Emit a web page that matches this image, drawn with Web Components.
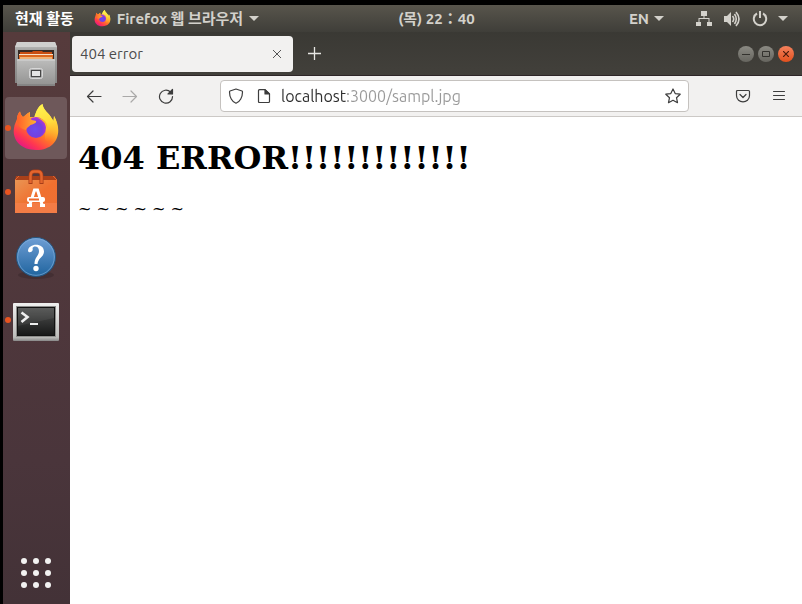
<!DOCTYPE html>
<html lang="ko">
<head>
<meta charset="utf-8">
<title>404 error</title>
<style>
html, body { height: 100%; }
body { margin: 0; background: #000; font-family: Ubuntu, "Noto Sans", "Noto Sans CJK KR", sans-serif; }
</style>
</head>
<body>
<desktop-shell>
  <top-bar slot="bar"></top-bar>
  <app-dock slot="dock">
    <dock-item label="파일"><svg viewBox="0 0 48 48">
      <defs><linearGradient id="fb" x1="0" y1="0" x2="0" y2="1"><stop offset="0" stop-color="#c9c9c8"/><stop offset=".2" stop-color="#a3a3a2"/><stop offset="1" stop-color="#858584"/></linearGradient>
      <linearGradient id="ff" x1="0" y1="0" x2="0" y2="1"><stop offset="0" stop-color="#bdbdbc"/><stop offset="1" stop-color="#929291"/></linearGradient></defs>
      <path d="M5 2H43L45 7V43H3V7Z" fill="url(#fb)"/><path d="M5 2H43L45 7H3Z" fill="#cfcfce"/>
      <path d="M6 10H42V20H6Z" fill="#382b25"/><path d="M8 12H20L21 11H30L31 12H40V20H8Z" fill="#c94e12"/><path d="M7 14H41V20H7Z" fill="#f6e0c8"/><path d="M7 15H41V20H7Z" fill="#dd681f"/><path d="M8 17H40V20H8Z" fill="#f1b275"/>
      <path d="M5 20Q5 19 6 19H42Q43 19 43 20V46H5Z" fill="url(#ff)"/><path d="M5 20H43" stroke="#d8d8d7"/><path d="M5 45H43" stroke="#777"/>
      <rect x="17.500" y="28.500" width="13" height="10" rx="2" fill="#aaa" stroke="#d8d8d8"/><rect x="19.500" y="30.500" width="9" height="6" fill="#e5e5e5" stroke="#464646"/></svg></dock-item>
    <dock-item label="Firefox 웹 브라우저" running active><fox-logo></fox-logo></dock-item>
    <dock-item label="Ubuntu 소프트웨어" running><svg viewBox="0 0 48 48">
      <defs><linearGradient id="sw" x1="0" y1="0" x2="1" y2="1"><stop offset="0" stop-color="#e99554"/><stop offset=".5" stop-color="#f0702f"/><stop offset="1" stop-color="#ee6f35"/></linearGradient></defs>
      <path d="M4 8H43L45 12V15H3V12Z" fill="#a8401a"/><path d="M7 8L3 12M41 8L45 12" stroke="#df6530"/>
      <path d="M3 12H45V45H3Z" fill="url(#sw)"/><path d="M3 35H45V45H3Z" fill="#f5824e" opacity=".7"/>
      <path d="M18.500 16V8Q18.500 3.500 22 3.500H26Q29.500 3.500 29.500 8V16" fill="none" stroke="#a63d19" stroke-width="4"/><path d="M18.500 15V8Q18.500 3.500 22 3.500H26Q29.500 3.500 29.500 8V15" fill="none" stroke="#e4652d" stroke-width="2.500"/>
      <path d="M17.500 38L22.500 22H25.500L30.500 38M15 37.500H20M28 37.500H33" fill="none" stroke="#fff" stroke-width="3"/><path d="M15 37.500H20M28 37.500H33" stroke="#fff" stroke-width="2"/><rect x="15" y="29" width="18" height="5" rx="2" fill="#fff"/><path d="M17 31.500H27" stroke="#ee6a2d" stroke-width="2"/></svg></dock-item>
    <dock-item label="도움말"><svg viewBox="0 0 48 48">
      <defs><linearGradient id="hp" x1="0" y1="0" x2="0" y2="1"><stop offset="0" stop-color="#6e9ed5"/><stop offset="1" stop-color="#1f649e"/></linearGradient></defs>
      <ellipse cx="24" cy="43" rx="18" ry="4" fill="#000" opacity=".15"/><circle cx="24" cy="25" r="19.500" fill="url(#hp)" stroke="#24557f"/><circle cx="24" cy="25" r="18.300" fill="none" stroke="#83afdc" opacity=".65"/>
      <path d="M16 19C16 11 32 10 32 19.500C32 25 26.300 25.500 25.500 32H22.500C22.500 25 27 24 27 19C27 13.500 21.500 13.500 20.500 16C22 19.500 17 22 16 19Z" fill="#fff"/><circle cx="24" cy="36.500" r="2.700" fill="#fff"/></svg></dock-item>
    <dock-item label="터미널" running><svg viewBox="0 0 48 48">
      <defs><linearGradient id="tf" x1="0" y1="0" x2="0" y2="1"><stop offset="0" stop-color="#f0f0ef"/><stop offset=".9" stop-color="#bcbcba"/><stop offset="1" stop-color="#888"/></linearGradient><linearGradient id="ts" x1="0" y1="0" x2="0" y2="1"><stop offset="0" stop-color="#515251"/><stop offset="1" stop-color="#171818"/></linearGradient></defs>
      <rect x="1" y="7" width="46" height="38" rx="1" fill="url(#tf)"/><rect x="4" y="10" width="40" height="31" fill="#8d8d8b"/><rect x="5" y="11" width="38" height="29" fill="#111"/><rect x="6" y="12" width="36" height="27" fill="url(#ts)"/><path d="M6 12H42V22L6 30Z" fill="#fff" opacity=".06"/>
      <path d="M9.500 16.500L15.500 21L9.500 26" fill="none" stroke="#eee" stroke-width="2.600"/><path d="M18 28H26" stroke="#eee" stroke-width="2"/></svg></dock-item>
  </app-dock>
  <browser-window>
    <error-page></error-page>
  </browser-window>
</desktop-shell>
<script>
const define = (name, html) => customElements.define(name, class extends HTMLElement {
  constructor() {
    super();
    const t = document.createElement('template');
    t.innerHTML = html;
    this.attachShadow({ mode: 'open' }).append(t.content.cloneNode(true));
  }
  connectedCallback() {
    const label = this.getAttribute('label');
    const button = this.shadowRoot.querySelector('button');
    if (label && button) button.setAttribute('aria-label', label);
  }
});
const reset = 'button{display:flex;align-items:center;justify-content:center;margin:0;padding:0;border:0;background:none;color:inherit;font:inherit}svg{display:block;flex:none}';

define('desktop-shell', `<style>
:host{display:grid;box-sizing:border-box;min-height:100vh;padding:5px 0 0 3px;grid-template:27px 1fr / 67px 1fr}
slot[name=bar]::slotted(*){grid-column:1 / -1}
</style><slot name="bar"></slot><slot name="dock"></slot><slot></slot>`);

define('fox-logo', `<style>:host{display:block;width:48px;height:48px}svg{display:block;width:100%;height:100%}</style>
<svg viewBox="0 0 48 48"><defs>
<linearGradient id="o" x1=".85" y1=".1" x2=".25" y2="1"><stop offset="0" stop-color="#fff44f"/><stop offset=".3" stop-color="#ffc52e"/><stop offset=".55" stop-color="#ff7b25"/><stop offset=".8" stop-color="#ff3750"/><stop offset="1" stop-color="#e31587"/></linearGradient>
<linearGradient id="y" x1=".4" y1="0" x2=".6" y2="1"><stop offset="0" stop-color="#fff44f"/><stop offset=".5" stop-color="#ffdc3c"/><stop offset="1" stop-color="#ff9a2a" stop-opacity="0"/></linearGradient>
<radialGradient id="p" cx=".45" cy=".6" r=".6"><stop offset="0" stop-color="#6a4cf0"/><stop offset=".6" stop-color="#7440df"/><stop offset="1" stop-color="#b932d4"/></radialGradient>
<linearGradient id="f" x1="0" y1="0" x2="1" y2="0"><stop offset="0" stop-color="#ff5f2a"/><stop offset="1" stop-color="#ffb032"/></linearGradient></defs>
<path d="M5 15C5 12 6 9.500 8 7.500C8.500 10 9.500 12 11 13C13 12 14.500 9.500 18 8V13H23C24 7 26.500 2 30.500 0C31 6 37 9 39.500 14L41.500 17L42 12C51 27 46 46 24 46C8 46 0 35 2 24C2.500 20 4 18 5 15Z" fill="url(#o)"/>
<path d="M22 14C24 7 26.500 2 30.500 0C31 6 37 9 39.500 14L41.500 17L42 12C47 21 47 31 42 36C37 40 32 38 33 31C36 23 30 15 22 14Z" fill="url(#y)"/>
<ellipse cx="24" cy="23.500" rx="10" ry="10.500" fill="url(#p)"/>
<path d="M26 14C32 14 36 19 35.500 25C34 20 31 16.500 26 14Z" fill="#ffb52f"/>
<path d="M5 15C5 12 6 9.500 8 7.500C8.500 10 9.500 12 11 13C13 12 14.500 9.500 18 8C17.500 10 17.500 12 18 14.500C19 16 22 16.500 24 17C25 19 20.500 20.500 18.500 21C17 22.500 14.500 24 14 26C9 25 4 21 5 15Z" fill="url(#f)"/>
</svg>`);

define('top-bar', `<style>${reset}
:host{display:grid;grid-template-columns:396fr auto 328fr;align-items:center;background:linear-gradient(#58554c,#3f3e39);color:#d3d1cb;font-size:15px;line-height:20px;font-weight:700}
.l,.r{display:flex;align-items:center;min-width:0;white-space:nowrap}.l{padding-left:12px;gap:20px}.l button:first-child{color:#fff}.app{gap:6px}fox-logo{width:17px;height:17px}
.r{justify-content:flex-end;padding-right:14px}.lang{gap:5px;padding-right:32px}.sys{gap:12px}.sys svg:last-child{margin-left:-2px}
</style><div class="l"><button>현재 활동</button><button class="app"><fox-logo></fox-logo><span>Firefox 웹 브라우저</span><svg width="10" height="6"><path d="M0 0H10L5 5Z" fill="currentColor"/></svg></button></div>
<button>(목) 22：40</button>
<div class="r"><button class="lang">EN<svg width="10" height="6"><path d="M0 0H10L5 5Z" fill="currentColor"/></svg></button>
<button class="sys" aria-label="시스템"><svg width="16" height="16" fill="currentColor"><path d="M5 0H11V5H8.500V7H13.500V11H16V15H11V11H12.500V8H3.500V11H5V15H0V11H2.500V7H7.500V5H5Z"/></svg><svg width="16" height="16"><path d="M0 5H3L7 1V15L3 11H0Z" fill="currentColor"/><path d="M8.500 5Q11 8 8.500 11M10.500 3Q14 8 10.500 13M12 1Q18 8 12 15" fill="none" stroke="currentColor" stroke-width="1.600"/></svg><svg width="16" height="16"><path d="M5 2.500A6.200 6.200 0 1 0 11 2.500M8 0V7" fill="none" stroke="currentColor" stroke-width="2"/></svg><svg width="10" height="6"><path d="M0 0H10L5 5Z" fill="currentColor"/></svg></button></div>`);

define('app-dock', `<style>${reset}
:host{display:flex;flex-direction:column;align-items:center;gap:2px;padding:1px 2px 12px 1px;background:linear-gradient(#563b3c,#50383c 40%,#4a353b 75%,#433237)}
button{margin-top:auto;width:40px;height:40px}
</style><slot></slot><button aria-label="프로그램 표시"><svg width="32" height="32" fill="#f2f2f1"><circle cx="4" cy="5" r="3"/><circle cx="16" cy="5" r="3"/><circle cx="28" cy="5" r="3"/><circle cx="4" cy="17" r="3"/><circle cx="16" cy="17" r="3"/><circle cx="28" cy="17" r="3"/><circle cx="4" cy="29" r="3"/><circle cx="16" cy="29" r="3"/><circle cx="28" cy="29" r="3"/></svg></button>`);

define('dock-item', `<style>${reset}
:host{display:block;position:relative;width:62px;height:62px;border-radius:4px}
:host([active]){background:#6e585a}
:host([running])::before{content:"";position:absolute;left:0;top:28px;width:6px;height:6px;border-radius:50%;background:#e95420}
button{width:100%;height:100%}::slotted(*){display:block;width:48px;height:48px}
</style><button><slot></slot></button>`);

define('browser-window', `<style>
:host{display:flex;flex-direction:column;min-width:0;background:#fff}</style>
<tab-strip></tab-strip><nav-toolbar></nav-toolbar><slot></slot>`);

define('tab-strip', `<style>${reset}
:host{display:flex;align-items:center;box-sizing:border-box;height:44px;padding:0 8px 0 2px;background:linear-gradient(#3a3934,#42403b);border-bottom:1px solid #2e2628;font-size:15px;line-height:20px}
.tab{display:flex;align-items:center;justify-content:space-between;box-sizing:border-box;flex:0 1 221px;height:36px;padding:0 8px;background:#f2f1f0;color:#4c4c4c;border-radius:4px}
.tab button{width:16px;height:16px}.new{width:24px;height:24px;margin-left:9px;color:#e8e7e4}
.win{display:flex;gap:4px;margin-left:auto}.win button{width:16px;height:16px;border-radius:50%;background:linear-gradient(#8b8a83,#66655f);color:#33322e}.win .x{background:linear-gradient(#f5825d,#e2501d);color:#4b1b0c}
</style><div class="tab" role="tab" aria-selected="true"><span>404 error</span><button aria-label="탭 닫기"><svg width="10" height="10"><path d="M1 1L9 9M9 1L1 9" stroke="#555"/></svg></button></div>
<button class="new" aria-label="새 탭"><svg width="13" height="13"><path d="M6.500 0V13M0 6.500H13" stroke="currentColor" stroke-width="1.300"/></svg></button>
<div class="win"><button aria-label="최소화"><svg width="8" height="8"><path d="M0 4.500H8" stroke="currentColor"/></svg></button><button aria-label="최대화"><svg width="8" height="6"><path d="M.5.5H7.500V5.500H.5Z" fill="none" stroke="currentColor"/></svg></button><button class="x" aria-label="닫기"><svg width="6" height="6"><path d="M0 0L6 6M6 0L0 6" stroke="currentColor" stroke-width="1.200"/></svg></button></div>`);

define('nav-toolbar', `<style>${reset}
:host{display:flex;align-items:center;box-sizing:border-box;height:41px;padding:0 11px 0 12px;background:#f2f1f0;border-bottom:1px solid #ccc9c6;color:#3d3d3d}
svg{fill:none;stroke:currentColor;stroke-width:1.200;stroke-linejoin:round;stroke-linecap:round}
button{width:24px;height:24px}.nav,.more{display:flex;gap:12px}button:disabled{color:#aaa9a8}
.url{display:flex;align-items:center;gap:4px;box-sizing:border-box;flex:1;min-width:0;height:32px;margin:0 42px;padding:0 3px;background:#fff;border:1px solid #c5c2bf;border-radius:4px}
input{flex:1;min-width:0;height:28px;padding:0 0 0 1px;border:0;outline:0;font:16px/20px Ubuntu,"Noto Sans",sans-serif;color:#999;background:linear-gradient(90deg,#2e2e2e 66px,#999 66px);-webkit-background-clip:text;background-clip:text;-webkit-text-fill-color:transparent}
</style><div class="nav"><button aria-label="뒤로"><svg width="16" height="16"><path d="M15 8.500H2M7 3L1.500 8.500L7 14"/></svg></button><button aria-label="앞으로" disabled><svg width="16" height="16"><path d="M1 8.500H14M9 3L14.500 8.500L9 14"/></svg></button><button aria-label="새로 고침"><svg width="16" height="16"><path d="M14.500 8.500A6.500 6.500 0 1 1 12.500 4L14 5.500"/><path d="M14.500 1.500V6H10Z" fill="currentColor"/></svg></button></div>
<div class="url"><button aria-label="추적 방지"><svg width="16" height="16"><path d="M8 1L14 3Q14.500 3.200 14.500 4C14.500 9 12 14 8 15.300C4 14 1.500 9 1.500 4Q1.500 3.200 2 3Z"/></svg></button><button aria-label="사이트 정보"><svg width="16" height="16"><path d="M3.500 1.700H9L13.500 6V13.500Q13.500 14.500 12.500 14.500H3.500Q2.500 14.500 2.500 13.500V2.700Q2.500 1.700 3.500 1.700Z"/><path d="M9 1.700V6H13.500Z" fill="currentColor"/></svg></button><input aria-label="주소" value="localhost:3000/sampl.jpg" spellcheck="false"><button aria-label="북마크"><svg width="16" height="16"><path d="M8 1L10.200 5.600L15.200 6.200L11.500 9.700L12.500 14.700L8 12.300L3.500 14.700L4.500 9.700L.8 6.200L5.800 5.600Z"/></svg></button></div>
<div class="more"><button aria-label="Pocket"><svg width="16" height="16"><path d="M2.500 2.500H13.500Q14.500 2.500 14.500 3.500V7.500C14.500 16 1.500 16 1.500 7.500V3.500Q1.500 2.500 2.500 2.500ZM5 6.500L8 9.500L11 6.500"/></svg></button><button aria-label="메뉴"><svg width="14" height="12" style="stroke-width:1"><path d="M1.500 1.500H12.500M1.500 5.500H12.500M1.500 9.500H12.500"/></svg></button></div>`);

define('error-page', `<style>
:host{display:block;padding:0 8px;background:#fff;color:#000;font:16px "DejaVu Serif",serif}
h1{margin:22px 0;font-size:32px;line-height:38px}p{margin:0;line-height:19px}
</style><h1>404 ERROR!!!!!!!!!!!!!</h1><p>~ ~ ~ ~ ~ ~</p>`);
</script>
</body>
</html>
